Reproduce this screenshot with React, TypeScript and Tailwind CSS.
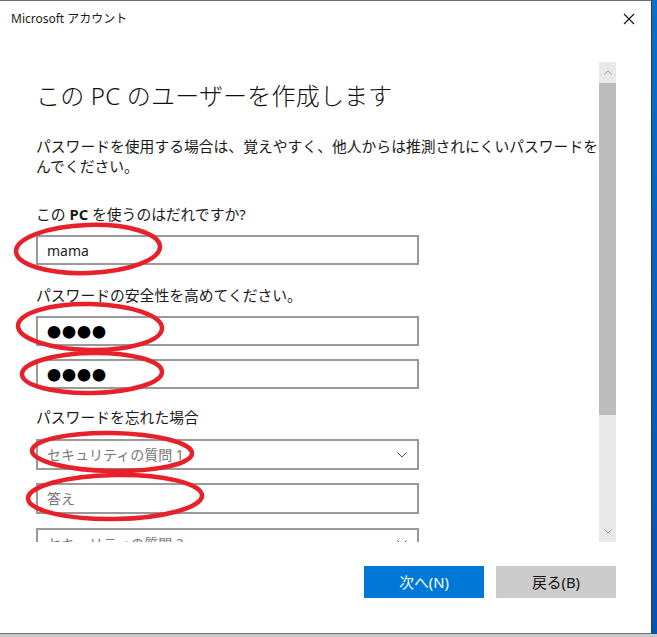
import { ReactNode } from "react";

const font = "font-['Noto_Sans','Noto_Sans_CJK_JP',sans-serif]";

// thin chevron used in the dropdowns and scrollbar
const Chevron = ({ up, className }: { up?: boolean; className?: string }) => (
  <svg width="10" height="6" viewBox="0 0 10 6" className={className}>
    <polyline
      points={up ? "0.5,5.5 5,1 9.5,5.5" : "0.5,0.5 5,5 9.5,0.5"}
      fill="none"
      stroke="currentColor"
      strokeWidth="1"
    />
  </svg>
);

const Box = ({
  children,
  select,
  className,
}: {
  children?: ReactNode;
  select?: boolean;
  className?: string;
}) => (
  <div
    className={`flex h-[30px] w-[383px] shrink-0 items-center justify-between border-2 border-[#999999] bg-white pl-[9px] pr-[10px] ${className ?? ""}`}
  >
    <div className="flex items-center">{children}</div>
    {select && <Chevron className="text-[#555]" />}
  </div>
);

const Dots = () => (
  <span className="font-['Noto_Sans_CJK_JP',sans-serif] text-[14px] leading-none tracking-[1px] text-black">
    ●●●●
  </span>
);

// hand-drawn red circles over the fields
const marks = [
  { cx: 88, cy: 249, rx: 72, ry: 24, r: -2 },
  { cx: 90, cy: 327, rx: 72, ry: 23, r: 1 },
  { cx: 92, cy: 373, rx: 70, ry: 20, r: -1 },
  { cx: 112, cy: 452, rx: 80, ry: 19, r: 1 },
  { cx: 115, cy: 497, rx: 87, ry: 22, r: -1 },
];

export default function App() {
  return (
    <div className={`relative h-[637px] w-[657px] overflow-hidden bg-[#c9c9c9] ${font}`}>
      <div className="flex h-[634px] w-[657px]">
        {/* dialog window */}
        <div className="flex h-[634px] w-[652px] flex-col border-b border-r border-t border-[#6e6e6e] border-r-[#3a3a3a] bg-white">
          {/* title bar */}
          <div className="flex h-[35px] shrink-0 items-center justify-between pl-[11px] pr-[16px]">
            <span className="text-[12px] text-[#1a1a1a]">Microsoft アカウント</span>
            <svg width="12" height="12" viewBox="0 0 12 12">
              <path d="M1 1L11 11M11 1L1 11" stroke="#111" strokeWidth="1.1" />
            </svg>
          </div>

          {/* body with scroll area */}
          <div className="mt-[26px] flex h-[480px] shrink-0">
            <div className="flex w-[599px] flex-col overflow-hidden pl-[36px] text-[#1a1a1a]">
              <h1 className="mt-[18px] text-[24px] font-light leading-[32px] tracking-[0.2px] text-[#111]">
                この PC のユーザーを作成します
              </h1>
              <p className="mt-[24px] text-[14.8px] leading-[20px]">
                パスワードを使用する場合は、覚えやすく、他人からは推測されにくいパスワードを
                <br />
                んでください。
              </p>
              <div className="mt-[28px] text-[14.8px] leading-[20px]">
                この <span className="font-bold">PC</span> を使うのはだれですか?
              </div>
              <Box className="mt-[11px]">
                <span className="text-[14px] text-[#222]">mama</span>
              </Box>
              <div className="mt-[20px] text-[14.8px] leading-[20px]">
                パスワードの安全性を高めてください。
              </div>
              <Box className="mt-[11px]">
                <Dots />
              </Box>
              <Box className="mt-[13px]">
                <Dots />
              </Box>
              <div className="mt-[18px] text-[14.8px] leading-[20px]">パスワードを忘れた場合</div>
              <Box select className="mt-[12px] h-[31px]">
                <span className="text-[14px] text-[#777]">セキュリティの質問 1</span>
              </Box>
              <Box className="mt-[13px] h-[31px]">
                <span className="text-[14px] text-[#777]">答え</span>
              </Box>
              <Box select className="mt-[14px]">
                <span className="text-[14px] text-[#777]">セキュリティの質問 2</span>
              </Box>
            </div>

            {/* scrollbar */}
            <div className="flex w-[17px] flex-col bg-[#e8e8e8]">
              <div className="flex h-[21px] items-center justify-center text-[#888]">
                <Chevron up className="h-[5px] w-[8px]" />
              </div>
              <div className="h-[332px] bg-[#bcbcbc]" />
              <div className="flex-1" />
              <div className="flex h-[21px] items-center justify-center text-[#888]">
                <Chevron className="h-[5px] w-[8px]" />
              </div>
            </div>
          </div>

          {/* footer buttons */}
          <div className="mt-[24px] flex justify-end gap-[12px] pr-[35px]">
            <button className="h-[32px] w-[120px] bg-[#0078d7] text-[14.8px] text-white">
              次へ(N)
            </button>
            <button className="h-[32px] w-[120px] bg-[#cccccc] text-[14.8px] text-[#111]">
              戻る(B)
            </button>
          </div>
        </div>
        <div className="h-[634px] flex-1 bg-gradient-to-b from-[#0a6fd0] to-[#0652b4]" />
      </div>

      <svg className="pointer-events-none absolute left-0 top-0" width="657" height="637">
        {marks.map((m, i) => (
          <ellipse
            key={i}
            cx={m.cx}
            cy={m.cy}
            rx={m.rx}
            ry={m.ry}
            transform={`rotate(${m.r} ${m.cx} ${m.cy})`}
            fill="none"
            stroke="#e8202a"
            strokeWidth="4.5"
          />
        ))}
      </svg>
    </div>
  );
}
